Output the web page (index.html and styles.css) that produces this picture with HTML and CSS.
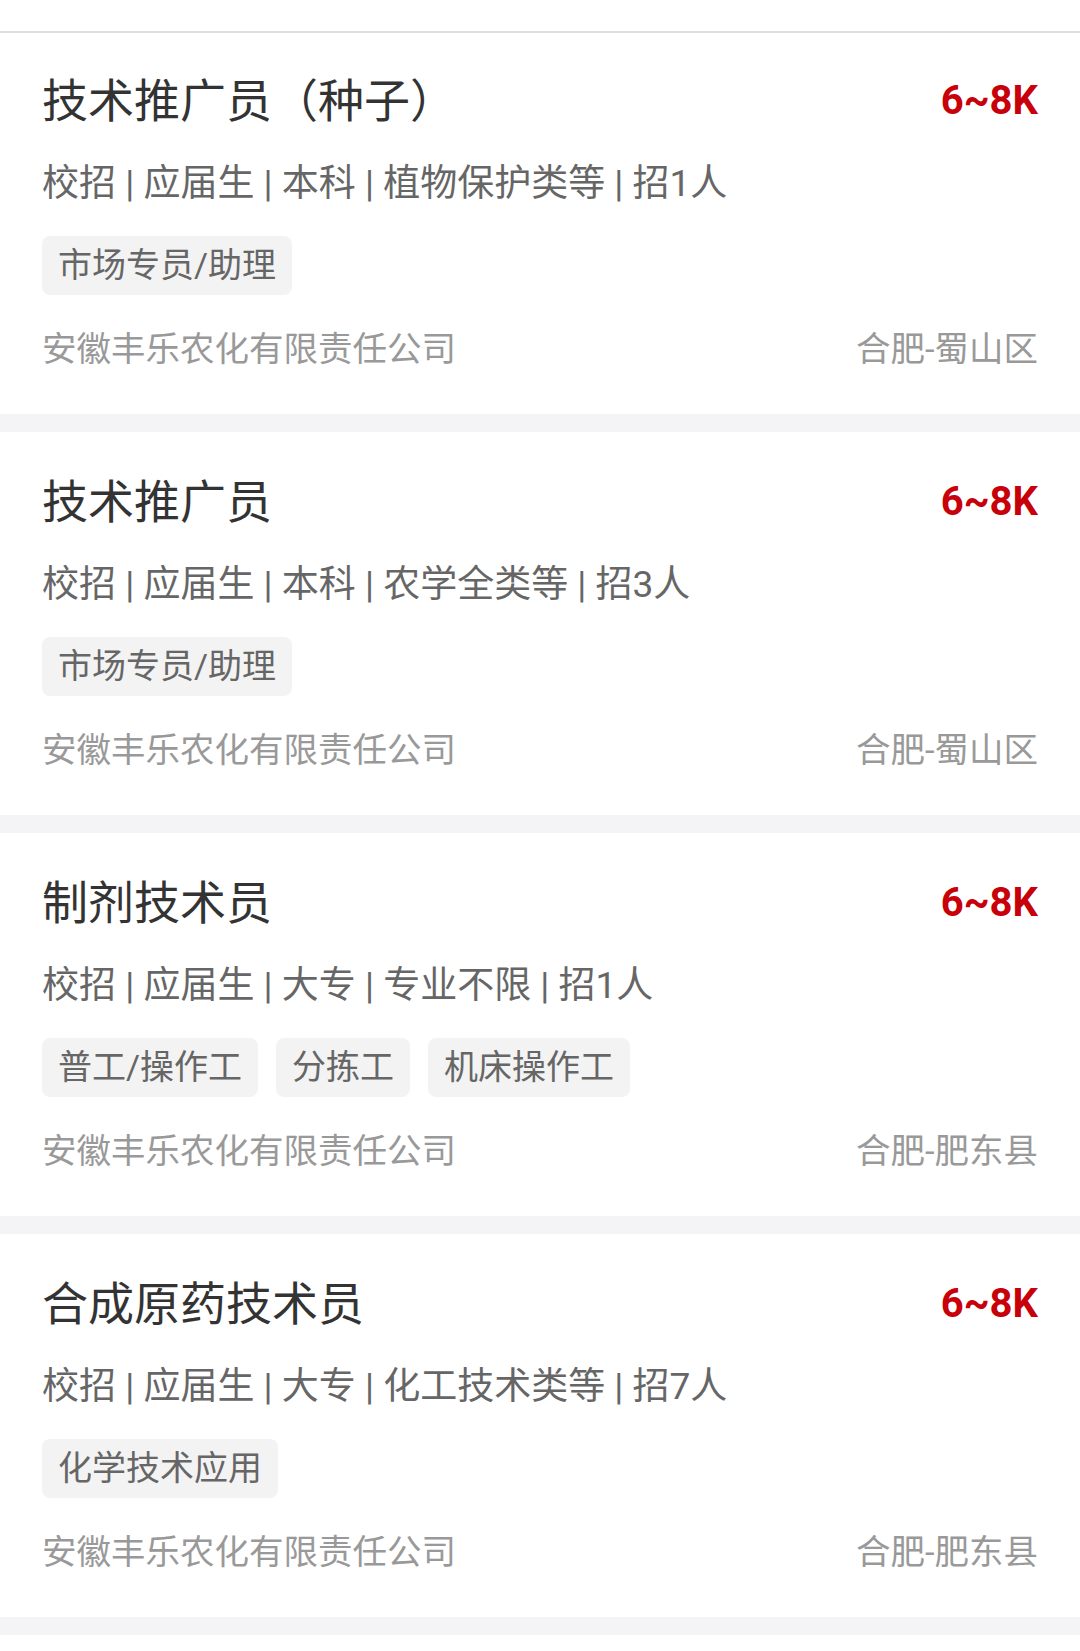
FILE: index.html
```html
<!doctype html>
<html>

<head>
    <meta charset="utf-8">
    <title>职位列表</title>
    <link rel="stylesheet" href="styles.css">
</head>

<body>

    <div class="topbar"></div>

    <div class="liste">
        <div class="jobb">
            <div class="jobb-topp">
                <div class="tittel">技术推广员（种子）</div>
                <div class="lonn">6~8K</div>
            </div>
            <div class="info">校招 | 应届生 | 本科 | 植物保护类等 | 招1人</div>
            <div class="tagger">
                <span class="tag">市场专员/助理</span>
            </div>
            <div class="bunn">
                <span class="firma">安徽丰乐农化有限责任公司</span>
                <span class="sted">合肥-蜀山区</span>
            </div>
        </div>

        <div class="jobb">
            <div class="jobb-topp">
                <div class="tittel">技术推广员</div>
                <div class="lonn">6~8K</div>
            </div>
            <div class="info">校招 | 应届生 | 本科 | 农学全类等 | 招3人</div>
            <div class="tagger">
                <span class="tag">市场专员/助理</span>
            </div>
            <div class="bunn">
                <span class="firma">安徽丰乐农化有限责任公司</span>
                <span class="sted">合肥-蜀山区</span>
            </div>
        </div>

        <div class="jobb">
            <div class="jobb-topp">
                <div class="tittel">制剂技术员</div>
                <div class="lonn">6~8K</div>
            </div>
            <div class="info">校招 | 应届生 | 大专 | 专业不限 | 招1人</div>
            <div class="tagger">
                <span class="tag">普工/操作工</span>
                <span class="tag">分拣工</span>
                <span class="tag">机床操作工</span>
            </div>
            <div class="bunn">
                <span class="firma">安徽丰乐农化有限责任公司</span>
                <span class="sted">合肥-肥东县</span>
            </div>
        </div>

        <div class="jobb">
            <div class="jobb-topp">
                <div class="tittel">合成原药技术员</div>
                <div class="lonn">6~8K</div>
            </div>
            <div class="info">校招 | 应届生 | 大专 | 化工技术类等 | 招7人</div>
            <div class="tagger">
                <span class="tag">化学技术应用</span>
            </div>
            <div class="bunn">
                <span class="firma">安徽丰乐农化有限责任公司</span>
                <span class="sted">合肥-肥东县</span>
            </div>
        </div>
    </div>

</body>

</html>
```

FILE: styles.css
```css
body {
    margin: 0;
    background-color: white;
    font-family: Roboto, "Noto Sans CJK SC", sans-serif;
}

.topbar {
    height: 31px;
    border-bottom: 2px solid #dedede;
}

.jobb {
    height: 343px;
    padding: 40px 42px 0 42px;
    border-bottom: 18px solid #f4f4f6;
}

/* forste kort ligger litt under streken */
.jobb:first-child {
    padding-top: 38px;
}

.jobb-topp {
    display: flex;
    justify-content: space-between;
    align-items: center;
    height: 60px;
}

.tittel {
    font-size: 46px;
    line-height: 60px;
    color: #333333;
}

.lonn {
    font-size: 40px;
    line-height: 60px;
    font-weight: bold;
    color: #c8000a;
}

.info {
    margin-top: 28px;
    font-size: 37px;
    line-height: 50px;
    color: #666666;
}

.tagger {
    display: flex;
    gap: 18px;
    margin-top: 27px;
}

.tag {
    display: inline-block;
    padding: 0 16px;
    font-size: 34px;
    line-height: 59px;
    color: #666666;
    background-color: #f3f3f3;
    border-radius: 8px;
}

.bunn {
    display: flex;
    justify-content: space-between;
    margin-top: 29px;
    font-size: 34.5px;
    line-height: 50px;
    color: #999999;
}
```
